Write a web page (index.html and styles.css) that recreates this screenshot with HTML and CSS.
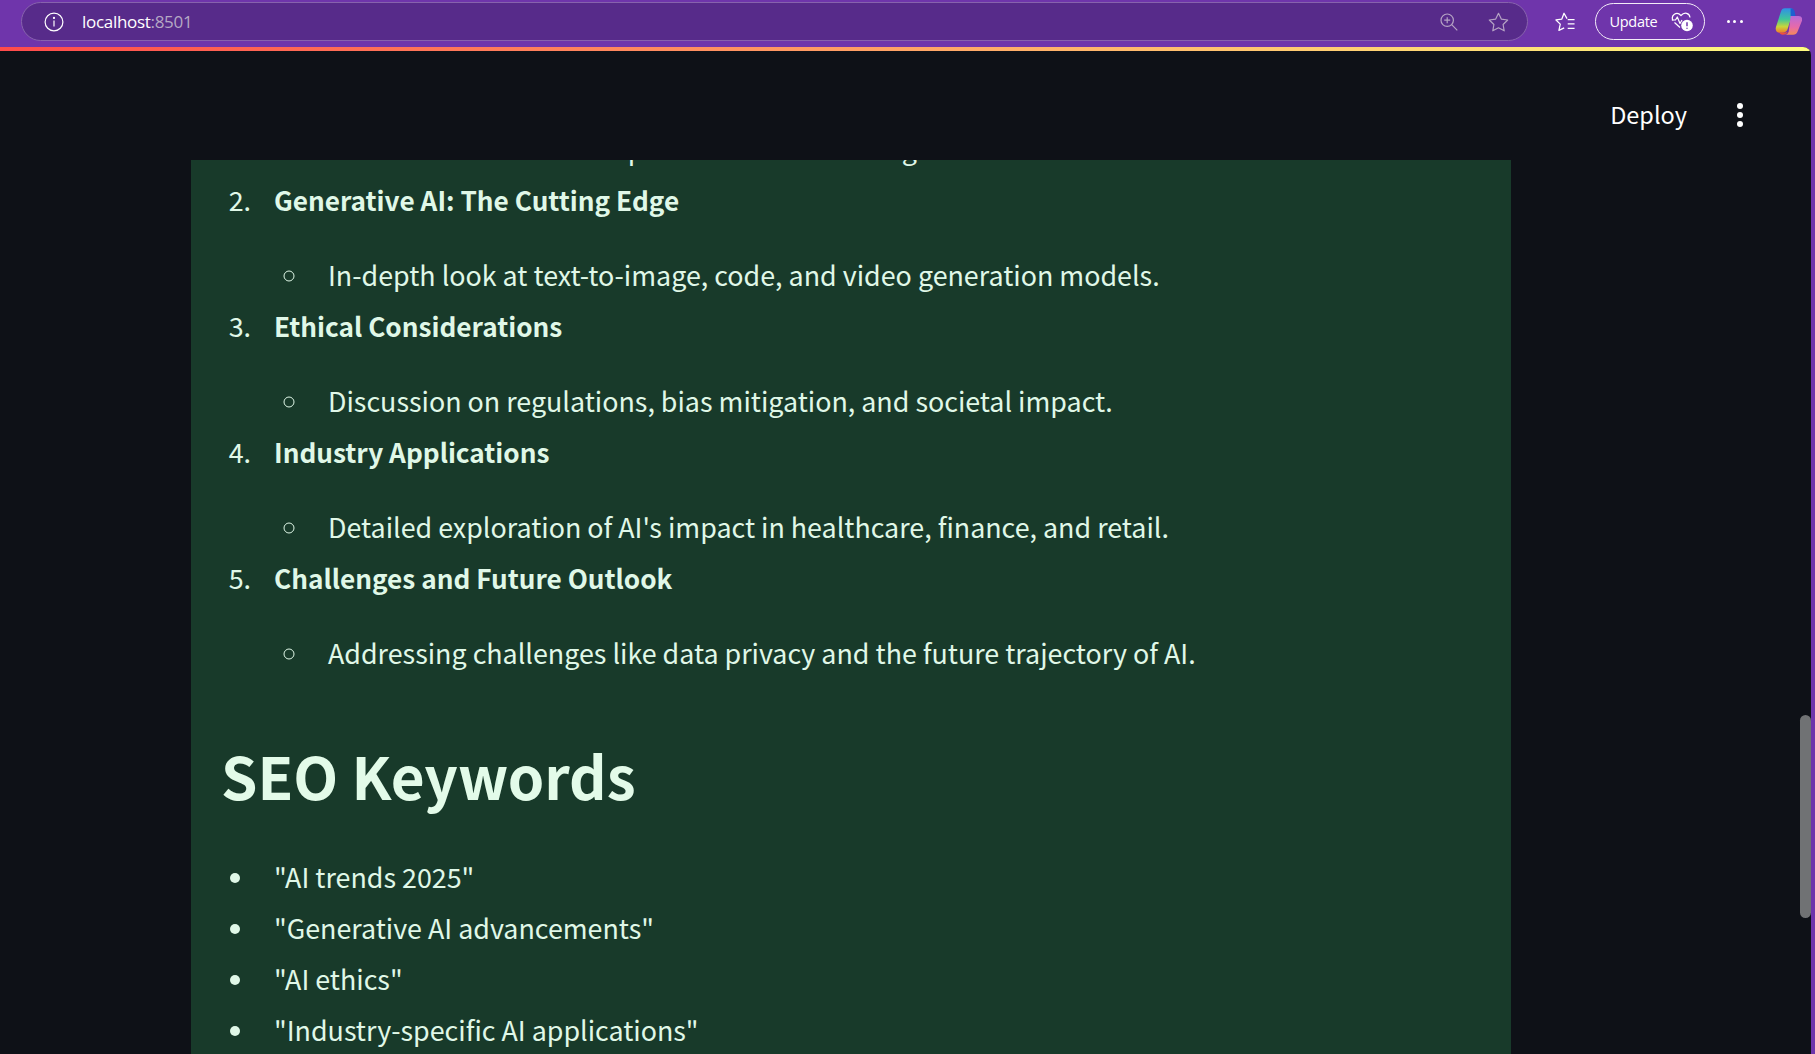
FILE: index.html

```html
<!DOCTYPE html>
<html>
<head>
  <title>localhost:8501</title>
  <link rel="stylesheet" href="styles.css">
</head>
<body>
  <div class="toolbar">
    <div class="address">
      <svg class="info-icon" width="20" height="20" viewBox="0 0 20 20" fill="none" stroke="#fff" stroke-width="1.2">
        <circle cx="10" cy="10" r="8.9"/>
        <path d="M10 8.6v6"/>
        <circle cx="10" cy="5.9" r=".5" fill="#fff"/>
      </svg>
      <span class="url">localhost<span class="port">:8501</span></span>
      <svg class="zoom-icon" width="18" height="18" viewBox="0 0 18 18" fill="none" stroke="#b5a3c4" stroke-width="1.2">
        <circle cx="7.2" cy="7.2" r="6.2"/>
        <path d="M11.7 11.7l5.6 5.6M7.2 4.2v6M4.2 7.2h6"/>
      </svg>
      <svg class="star-icon" width="21" height="20" viewBox="0 0 21 20" fill="none" stroke="#b5a3c4" stroke-width="1.2" stroke-linejoin="round">
        <path d="M10.5 1.3l2.8 5.8 6.4.9-4.6 4.5 1.1 6.3-5.7-3-5.7 3 1.1-6.3L1.3 8l6.4-.9z"/>
      </svg>
    </div>
    <svg class="fav-icon" width="21" height="20" viewBox="0 0 21 20" fill="none" stroke="#fff" stroke-width="1.3" stroke-linejoin="round">
      <path d="M12.3 6.6L9.2 1 7 7 1 7.9l4.4 4.3L4 18.6l5.4-2.6"/>
      <path d="M13 7.5h7M13 12h7M13 16.5h7"/>
    </svg>
    <div class="update">
      <span>Update</span>
      <svg width="22" height="21" viewBox="0 0 22 21" fill="none" stroke="#fff" stroke-width="1.2" stroke-linejoin="round">
        <path d="M2 9.5C-.5 4.500 5.500-.5 10 4.500c3.500-4 8.500-2.500 9 2"/>
        <path d="M.8 9h3.700l1.800-3 2.700 6.500 2-3.500"/>
        <path d="M3.500 11.500l5.500 5"/>
        <circle cx="16" cy="14.500" r="5.800" fill="#fff" stroke="none"/>
        <path d="M16 11.200v4M16 16.800v1" stroke="#6f35ab" stroke-width="1.500"/>
      </svg>
    </div>
    <div class="more"><i></i><i></i><i></i></div>
    <svg class="copilot" width="28" height="27" viewBox="0 0 28 27">
      <defs>
        <linearGradient id="copilotLeft" x1="0" y1="0" x2="0" y2="1">
          <stop offset="0" stop-color="#2f8fe8"/>
          <stop offset=".45" stop-color="#3fc79a"/>
          <stop offset=".75" stop-color="#c9d63a"/>
          <stop offset="1" stop-color="#f07a2c"/>
        </linearGradient>
        <linearGradient id="copilotRight" x1="0" y1="0" x2="0" y2="1">
          <stop offset="0" stop-color="#b86bd8"/>
          <stop offset=".6" stop-color="#e86aa8"/>
          <stop offset="1" stop-color="#f48a5a"/>
        </linearGradient>
      </defs>
      <path d="M10 0h6c2 0 3 1.500 2.500 3.500L13 21c-.8 2.500-2.500 4-5 4H5C1.500 25 0 22 1 19L6 3.500C6.700 1.200 8 0 10 0z" fill="url(#copilotLeft)"/>
      <path d="M16 0c2 0 3.500 1 4 3l1 5h-5z" fill="#1f5fd0"/>
      <path d="M16 8h8c3 0 4.500 2 3.500 5L23 24c-.7 2-2.300 3-4.500 3H10c2 0 3.200-1 4-3z" fill="url(#copilotRight)"/>
      <path d="M8 27c-2 0-3-1-3.500-2H10l3-1c-.8 2-2.500 3-5 3z" fill="#ef4f3e"/>
    </svg>
  </div>

  <div class="page">
    <div class="rainbow"></div>
    <div class="app-header">
      <span class="deploy">Deploy</span>
      <div class="kebab"><i></i><i></i><i></i></div>
    </div>

    <div class="card">
      <!-- previous list item, scrolled almost out of view -->
      <div class="peek">
        <div class="peek-line">Overview of AI and its rapid evolution and integration of AI tools.</div>
      </div>
      <ol class="outline" start="2">
        <li>
          <strong>Generative AI: The Cutting Edge</strong>
          <ul>
            <li>In-depth look at text-to-image, code, and video generation models.</li>
          </ul>
        </li>
        <li>
          <strong>Ethical Considerations</strong>
          <ul>
            <li>Discussion on regulations, bias mitigation, and societal impact.</li>
          </ul>
        </li>
        <li>
          <strong>Industry Applications</strong>
          <ul>
            <li>Detailed exploration of AI's impact in healthcare, finance, and retail.</li>
          </ul>
        </li>
        <li>
          <strong>Challenges and Future Outlook</strong>
          <ul>
            <li>Addressing challenges like data privacy and the future trajectory of AI.</li>
          </ul>
        </li>
      </ol>
      <h2>SEO Keywords</h2>
      <ul class="keywords">
        <li>"AI trends 2025"</li>
        <li>"Generative AI advancements"</li>
        <li>"AI ethics"</li>
        <li>"Industry-specific AI applications"</li>
      </ul>
    </div>

    <div class="scrollbar"></div>
  </div>
</body>
</html>
```

FILE: styles.css

```css
* {
  box-sizing: border-box;
}
body {
  margin: 0;
  height: 100vh;
  overflow: hidden;
  display: flex;
  flex-direction: column;
  background: #6f35ab;
  font-family: "Noto Sans CJK SC", "Source Sans Pro", "Noto Sans", sans-serif;
}

/* browser chrome */
.toolbar {
  height: 47px;
  flex: none;
  display: flex;
  align-items: center;
  padding: 0 13px 4px 21px;
  color: white;
  font-family: "Open Sans", sans-serif;
}
.address {
  width: 1507px;
  height: 39px;
  flex: none;
  display: flex;
  align-items: center;
  padding: 0 18px 0 22px;
  background: #572b8a;
  border: 1px solid #8762ad;
  border-radius: 20px;
}
.url {
  margin-left: 18px;
  font-size: 17px;
  letter-spacing: -0.3px;
  flex: 1;
}
.port {
  color: #b5a8c4;
}
.star-icon {
  margin-left: 30px;
}
.fav-icon {
  margin-left: 27px;
}
.update {
  width: 112px;
  height: 37px;
  margin-left: 19px;
  display: flex;
  align-items: center;
  justify-content: space-between;
  padding: 0 11px 0 14px;
  border: 1.5px solid #f3ecf8;
  border-radius: 19px;
  font-size: 14.500px;
  font-weight: 500;
  letter-spacing: -0.3px;
}
.more {
  margin-left: 22px;
  display: flex;
  gap: 3.500px;
}
.more i {
  width: 3px;
  height: 3px;
  background: white;
  border-radius: 50%;
}
.copilot {
  margin-left: 32px;
}

/* streamlit page */
.page {
  flex: 1;
  position: relative;
  display: flex;
  flex-direction: column;
  min-height: 0;
  margin-right: 4px;
  background: #0e1117;
  border-top-right-radius: 8px;
  overflow: hidden;
}
.rainbow {
  height: 4px;
  flex: none;
  background: linear-gradient(90deg, #ff4b4b, #fffd80);
}
.app-header {
  height: 109px;
  flex: none;
  display: flex;
  align-items: center;
  justify-content: flex-end;
  padding: 19px 68px 0 0;
  color: white;
}
.deploy {
  margin-bottom: 2px;
  font-size: 23.500px;
}
.kebab {
  margin-left: 50px;
  display: flex;
  flex-direction: column;
  gap: 3px;
}
.kebab i {
  width: 6px;
  height: 6px;
  background: white;
  border-radius: 50%;
}
.card {
  width: 1320px;
  flex: 1;
  margin-left: 191px;
  padding: 0 30px;
  background: #183a2a;
  color: #e0f8e8;
  font-size: 26.850px;
  line-height: 45px;
  overflow: hidden;
}
.peek {
  height: 11px;
  margin: 0 0 6px 107px;
  display: flex;
  align-items: flex-end;
  overflow: hidden;
  white-space: nowrap;
}
.peek-line {
  flex: none;
}
.outline,
.keywords {
  margin: 0;
  padding-left: 36px;
}
.outline > li,
.keywords > li {
  margin-top: 6px;
  padding-left: 17px;
}
.outline > li:first-child {
  margin-top: 0;
}
.outline strong {
  font-size: 26.200px;
}
.outline ul {
  margin: 29px 0 0;
  padding-left: 37px;
  list-style-type: circle;
}
.outline ul li {
  padding-left: 17px;
}
h2 {
  margin: 62px 0 41px;
  font-size: 58.400px;
  font-weight: 700;
  line-height: 76px;
  color: #e3fbe9;
}
.keywords {
  list-style-type: disc;
}
.scrollbar {
  position: absolute;
  top: 668px;
  right: 0;
  width: 11px;
  height: 203px;
  background: #707274;
  border-radius: 6px;
}
```
